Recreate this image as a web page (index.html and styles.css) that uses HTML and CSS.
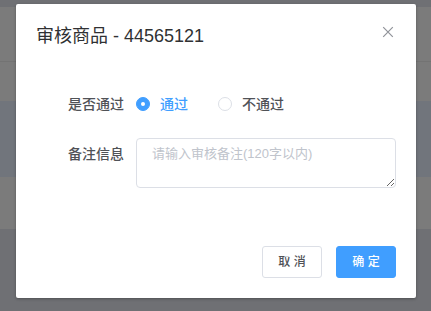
FILE: index.html
```html
<!DOCTYPE html>
<html lang="zh-CN">
<head>
<meta charset="utf-8">
<title>审核商品</title>
<link rel="stylesheet" href="styles.css">
</head>
<body>
<div class="page">
  <div class="band band-top"></div>
  <div class="band band-row"></div>
  <div class="band band-line"></div>
  <div class="band band-row2"></div>
  <div class="band band-blue"></div>
  <div class="band band-row3"></div>
  <div class="band band-bottom"></div>

  <div class="dialog">
    <div class="dialog-header">
      <span class="dialog-title">审核商品 - 44565121</span>
      <button class="dialog-close" aria-label="关闭">
        <svg width="16" height="16" viewBox="0 0 16 16"><path d="M3.2 3.2 L12.8 12.8 M12.8 3.2 L3.2 12.8" stroke="#909399" stroke-width="1.2" fill="none"/></svg>
      </button>
    </div>
    <div class="dialog-body">
      <div class="form-item">
        <label class="form-label">是否通过</label>
        <div class="form-content radios">
          <label class="radio checked"><span class="radio-input"></span><span class="radio-label">通过</span></label>
          <label class="radio"><span class="radio-input"></span><span class="radio-label">不通过</span></label>
        </div>
      </div>
      <div class="form-item">
        <label class="form-label">备注信息</label>
        <div class="form-content">
          <textarea class="textarea" placeholder="请输入审核备注(120字以内)"></textarea>
        </div>
      </div>
    </div>
    <div class="dialog-footer">
      <button class="btn btn-default">取 消</button>
      <button class="btn btn-primary">确 定</button>
    </div>
  </div>
</div>
</body>
</html>
```

FILE: styles.css
```css
html, body {
  margin: 0;
  padding: 0;
}
body {
  font-family: "Liberation Sans", "Noto Sans CJK SC", sans-serif;
  width: 431px;
  height: 311px;
  overflow: hidden;
}
.page {
  position: relative;
  width: 431px;
  height: 311px;
}
.band { width: 100%; }
.band-top { height: 7px; background: #6f7074; }
.band-row { height: 54px; background: #7b7b7b; }
.band-line { height: 1px; background: #737373; }
.band-row2 { height: 39px; background: #7b7b7b; }
.band-blue { height: 76px; background: #71757c; }
.band-row3 { height: 52px; background: #7b7b7b; }
.band-bottom { height: 82px; background: #6f7074; }

.dialog {
  position: absolute;
  left: 16px;
  top: 4px;
  width: 400px;
  background: #fff;
  border-radius: 2px;
  box-shadow: 0 1px 3px rgba(0, 0, 0, 0.3);
  box-sizing: border-box;
}
.dialog-header {
  position: relative;
  padding: 20px 20px 10px;
}
.dialog-title {
  display: block;
  font-size: 18px;
  line-height: 24px;
  color: #303133;
}
.dialog-close {
  position: absolute;
  top: 20px;
  right: 20px;
  width: 16px;
  height: 16px;
  padding: 0;
  border: 0;
  background: none;
  display: flex;
}
.dialog-body {
  padding: 30px 20px;
}
.form-item {
  display: flex;
  margin-bottom: 18px;
}
.form-label {
  width: 100px;
  flex: none;
  box-sizing: border-box;
  padding-right: 12px;
  text-align: right;
  font-size: 14px;
  font-weight: 500;
  line-height: 32px;
  color: #505257;
}
.form-content {
  flex: 1;
  line-height: 32px;
}
.radios {
  display: flex;
  align-items: center;
  height: 32px;
}
.radio {
  display: flex;
  align-items: center;
  margin-right: 30px;
  font-size: 14px;
  font-weight: 500;
  color: #505257;
}
.radio-input {
  width: 14px;
  height: 14px;
  box-sizing: border-box;
  border: 1px solid #dcdfe6;
  border-radius: 50%;
  background: #fff;
  position: relative;
}
.radio.checked .radio-input {
  background: #409eff;
  border-color: #409eff;
}
.radio.checked .radio-input::after {
  content: "";
  position: absolute;
  left: 50%;
  top: 50%;
  width: 4px;
  height: 4px;
  margin: -2px 0 0 -2px;
  border-radius: 50%;
  background: #fff;
}
.radio-label {
  padding-left: 10px;
  line-height: 1;
}
.radio.checked .radio-label {
  color: #409eff;
}
.textarea {
  display: block;
  width: 100%;
  height: 50px;
  box-sizing: border-box;
  padding: 5px 15px;
  border: 1px solid #dcdfe6;
  border-radius: 4px;
  font-family: "Liberation Sans", "Noto Sans CJK SC", sans-serif;
  font-size: 13px;
  line-height: 1.5;
  color: #606266;
  resize: vertical;
  margin: 0;
  outline: none;
}
.textarea::placeholder {
  color: #c0c4cc;
}
.dialog-footer {
  display: flex;
  justify-content: flex-end;
  gap: 14px;
  padding: 10px 20px 20px;
}
.btn {
  width: 60px;
  height: 32px;
  box-sizing: border-box;
  border-radius: 3px;
  font-family: "Liberation Sans", "Noto Sans CJK SC", sans-serif;
  font-size: 12px;
  font-weight: 500;
  line-height: 1;
  padding: 0;
  white-space: pre;
}
.btn-default {
  background: #fff;
  border: 1px solid #dcdfe6;
  color: #505257;
}
.btn-primary {
  background: #409eff;
  border: 1px solid #409eff;
  color: #fff;
}
```
